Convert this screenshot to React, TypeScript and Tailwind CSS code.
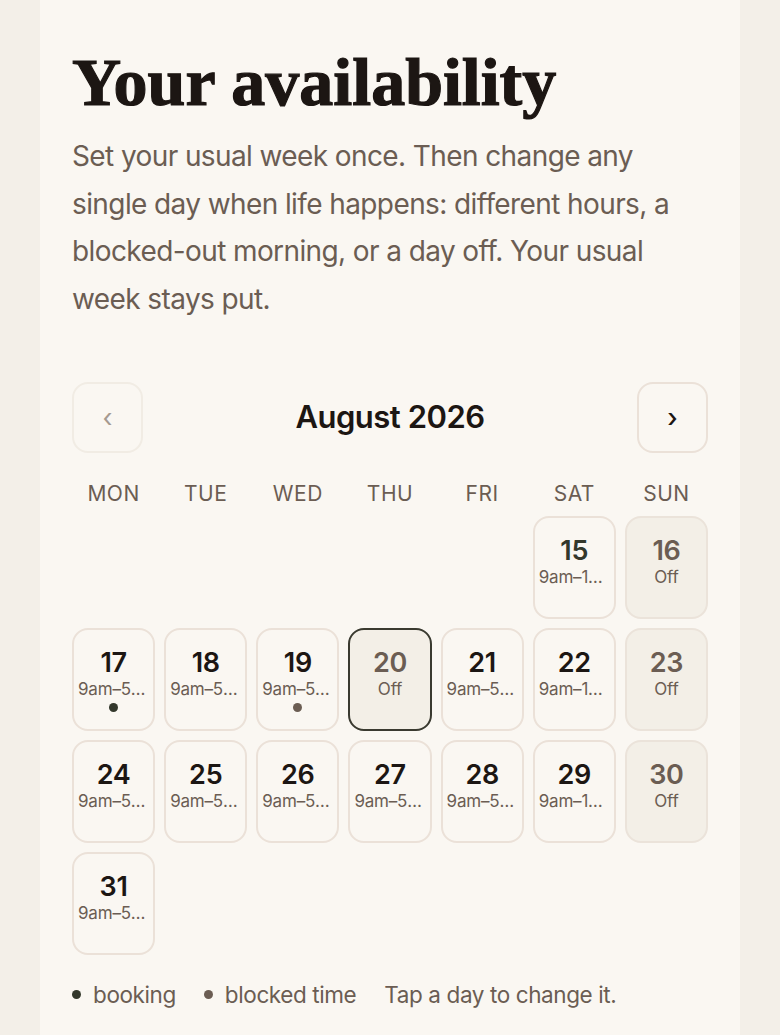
import React from "react";

type Day = {
  n: number;
  hours: string;
  off?: boolean;
  today?: boolean;
  selected?: boolean;
  dot?: "booking" | "blocked";
};

const days: (Day | null)[] = [
  null, null, null, null, null,
  { n: 15, hours: "9am–1pm", today: true },
  { n: 16, hours: "Off", off: true },
  { n: 17, hours: "9am–5pm", dot: "booking" },
  { n: 18, hours: "9am–5pm" },
  { n: 19, hours: "9am–5pm", dot: "blocked" },
  { n: 20, hours: "Off", off: true, selected: true },
  { n: 21, hours: "9am–5pm" },
  { n: 22, hours: "9am–1pm" },
  { n: 23, hours: "Off", off: true },
  { n: 24, hours: "9am–5pm" },
  { n: 25, hours: "9am–5pm" },
  { n: 26, hours: "9am–5pm" },
  { n: 27, hours: "9am–5pm" },
  { n: 28, hours: "9am–5pm" },
  { n: 29, hours: "9am–1pm" },
  { n: 30, hours: "Off", off: true },
  { n: 31, hours: "9am–5pm" },
];

const weekdays = ["MON", "TUE", "WED", "THU", "FRI", "SAT", "SUN"];

function DayCell({ day }: { day: Day }) {
  const numColor = day.off ? "text-[#6b5d53]" : day.today ? "text-[#33382c]" : "text-[#1c1613]";
  return (
    <button
      type="button"
      className={`flex h-[103px] min-w-0 flex-col items-center rounded-2xl border-2 px-1 pt-[16px] ${
        day.selected
          ? "border-[#3a3a30] bg-[#f3efe7]"
          : day.off
            ? "border-[#ebe3da] bg-[#f3efe7]"
            : "border-[#ebe1d8] bg-[#faf7f2]"
      }`}
    >
      <span className={`text-[27px] font-semibold leading-[33px] tracking-[-0.3px] ${numColor}`}>{day.n}</span>
      <span className="w-full truncate text-center text-[17px] leading-[20px] tracking-[-0.2px] text-[#6b5d53]">
        {day.hours}
      </span>
      {day.dot ? (
        <span
          className={`mt-[4px] size-[9px] rounded-full ${
            day.dot === "booking" ? "bg-[#33382c]" : "bg-[#6b5d53]"
          }`}
        />
      ) : null}
    </button>
  );
}

export default function App() {
  return (
    <div className="min-h-[1035px] bg-[#f3efe8] font-['Inter','Liberation_Sans',sans-serif]">
      <div className="mx-auto min-h-[1035px] w-[700px] bg-[#faf7f2] px-8 pt-[44px]">
        <h1 className="font-['Liberation_Serif',serif] text-[68px] font-bold leading-[76px] text-[#1c1613] [-webkit-text-stroke:1.2px_#1c1613]">
          Your availability
        </h1>
        <p className="mt-[13px] max-w-[612px] text-[28px] leading-[47.5px] tracking-[-0.6px] text-[#6b5d53]">
          Set your usual week once. Then change any single day when life happens: different hours, a
          blocked-out morning, or a day off. Your usual week stays put.
        </p>

        <div className="mt-[59px] flex items-center justify-between">
          <button
            type="button"
            disabled
            className="flex size-[71px] items-center justify-center rounded-2xl border-2 border-[#f1ece4] text-[26px] text-[#a59a90]"
          >
            ‹
          </button>
          <h2 className="text-[31px] font-semibold tracking-[-0.5px] text-[#1c1613]">August 2026</h2>
          <button
            type="button"
            className="flex size-[71px] items-center justify-center rounded-2xl border-2 border-[#ebe1d8] text-[26px] font-medium text-[#1c1613]"
          >
            ›
          </button>
        </div>

        <div className="mt-[27px] grid grid-cols-7 gap-[9px]">
          {weekdays.map((w) => (
            <div key={w} className="text-center text-[21px] leading-[28px] tracking-[0.5px] text-[#6b5d53]">
              {w}
            </div>
          ))}
        </div>

        <div className="mt-[8px] grid grid-cols-7 gap-[9px]">
          {days.map((d, i) => (d ? <DayCell key={i} day={d} /> : <div key={i} />))}
        </div>

        <div className="mt-[23px] flex items-center gap-7 text-[22.5px] tracking-[-0.4px] text-[#6b5d53]">
          <span className="flex items-center gap-3">
            <span className="size-[9px] rounded-full bg-[#33382c]" />
            booking
          </span>
          <span className="flex items-center gap-3">
            <span className="size-[9px] rounded-full bg-[#6b5d53]" />
            blocked time
          </span>
          <span>Tap a day to change it.</span>
        </div>
      </div>
    </div>
  );
}
